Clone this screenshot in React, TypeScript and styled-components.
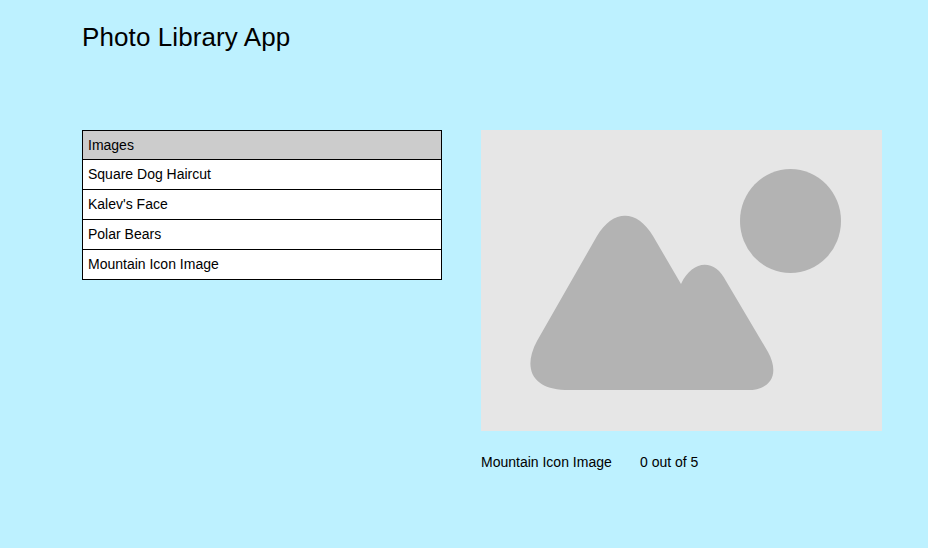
import React from "react";
import styled, { createGlobalStyle } from "styled-components";

const GlobalStyle = createGlobalStyle`
  *, *::before, *::after { box-sizing: border-box; }
  body {
    margin: 0;
    background: #bdf1ff;
    color: #000;
    font-family: "Liberation Sans", Arial, sans-serif;
    font-size: 14px;
  }
`;

const Page = styled.main`
  min-height: 548px;
  padding: 22px 46px 0 82px;
`;

const Title = styled.h1`
  margin: 0;
  height: 108px;
  font-size: 26px;
  font-weight: 400;
  line-height: 30px;
  letter-spacing: 0.1px;
`;

const Columns = styled.div`
  display: flex;
  align-items: flex-start;
  gap: 39px;
`;

const List = styled.ul`
  width: 360px;
  margin: 0;
  padding: 0;
  list-style: none;
  border: 1px solid #000;
  background: #fff;
`;

const Row = styled.li<{ $header?: boolean }>`
  height: ${(p) => (p.$header ? 28 : 30)}px;
  padding-left: 5px;
  line-height: 28px;
  background: ${(p) => (p.$header ? "#ccc" : "#fff")};
  border-top: ${(p) => (p.$header ? "0" : "1px solid #000")};
`;

const Viewer = styled.section`
  width: 401px;
`;

const Picture = styled.svg`
  display: block;
  width: 401px;
  height: 301px;
`;

const Caption = styled.div`
  display: flex;
  margin-top: 23px;
  line-height: 16px;
`;

const Name = styled.span`
  width: 159px;
`;

const images = ["Square Dog Haircut", "Kalev's Face", "Polar Bears", "Mountain Icon Image"];

export default function App() {
  return (
    <>
      <GlobalStyle />
      <Page>
        <Title>Photo Library App</Title>
        <Columns>
          <List>
            <Row $header>Images</Row>
            {images.map((name) => (
              <Row key={name}>{name}</Row>
            ))}
          </List>
          <Viewer>
            <Picture viewBox="0 0 401 301" role="img" aria-label="Mountain Icon Image">
              <rect width="401" height="301" fill="#e6e6e6" />
              <ellipse cx="309.5" cy="91" rx="50.5" ry="52" fill="#b3b3b3" />
              <path
                fill="#b3b3b3"
                d="M84 260C52 259 41 239 56 211L116 106C132 79 156 79 172 106L200 154C212 129 234 129 245 151L287 222C299 244 290 260 267 260Z"
              />
            </Picture>
            <Caption>
              <Name>Mountain Icon Image</Name>
              <span>0 out of 5</span>
            </Caption>
          </Viewer>
        </Columns>
      </Page>
    </>
  );
}
